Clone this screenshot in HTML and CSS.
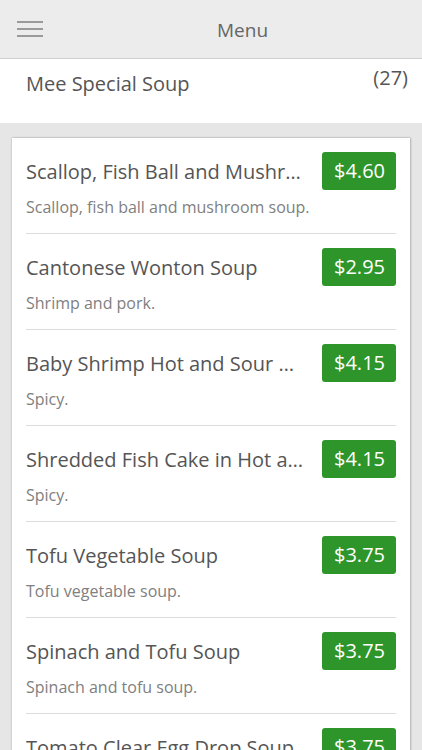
FILE: index.html
```html
<!DOCTYPE html>
<html lang="en">
<head>
    <meta charset="UTF-8">
    <title>Menu</title>
    <link rel="stylesheet" href="styles.css">
</head>
<body>

<div class="top-bar">
    <span class="burger"><i></i><i></i><i></i></span>
    <span class="top-title">Menu</span>
</div>

<div class="category">
    <span class="category-name">Mee Special Soup</span>
    <span class="category-count">(27)</span>
</div>

<div class="list-wrap">
    <ul class="dish-list">
        <li class="dish">
            <div class="dish-name">Scallop, Fish Ball and Mushroom Soup</div>
            <span class="price">$4.60</span>
            <div class="dish-desc">Scallop, fish ball and mushroom soup.</div>
        </li>
        <li class="dish">
            <div class="dish-name">Cantonese Wonton Soup</div>
            <span class="price">$2.95</span>
            <div class="dish-desc">Shrimp and pork.</div>
        </li>
        <li class="dish">
            <div class="dish-name">Baby Shrimp Hot and Sour Soup</div>
            <span class="price">$4.15</span>
            <div class="dish-desc">Spicy.</div>
        </li>
        <li class="dish">
            <div class="dish-name">Shredded Fish Cake in Hot and Sour Soup</div>
            <span class="price">$4.15</span>
            <div class="dish-desc">Spicy.</div>
        </li>
        <li class="dish">
            <div class="dish-name">Tofu Vegetable Soup</div>
            <span class="price">$3.75</span>
            <div class="dish-desc">Tofu vegetable soup.</div>
        </li>
        <li class="dish">
            <div class="dish-name">Spinach and Tofu Soup</div>
            <span class="price">$3.75</span>
            <div class="dish-desc">Spinach and tofu soup.</div>
        </li>
        <li class="dish">
            <div class="dish-name">Tomato Clear Egg Drop Soup</div>
            <span class="price">$3.75</span>
            <div class="dish-desc">Tomato clear egg drop soup.</div>
        </li>
    </ul>
</div>

</body>
</html>
```

FILE: styles.css
```css
html, body {
    margin: 0;
    height: 100%;
    overflow: hidden;
}

body {
    font-family: "Open Sans", "Liberation Sans", sans-serif;
    background-color: #e6e6e6;
    color: #555;
}

/* top bar */
.top-bar {
    height: 58px;
    background-color: #ececec;
    border-bottom: 1px solid #cfcfcf;
    display: flex;
    align-items: center;
    padding-left: 17px;
}

.burger {
    width: 26px;
    display: flex;
    flex-direction: column;
    gap: 5px;
}

.burger i {
    display: block;
    height: 2px;
    background-color: #9a9a9a;
}

.top-title {
    flex: 1;
    text-align: center;
    font-size: 19px;
    color: #666;
    padding-left: 20px;
    margin-top: 2px;
}

/* category header */
.category {
    background-color: #fff;
    height: 64px;
    display: flex;
    justify-content: space-between;
    padding: 0 14px 0 26px;
}

.category-name {
    font-size: 20px;
    margin-top: 11px;
}

.category-count {
    font-size: 20px;
    margin-top: 5px;
}

/* list card */
.list-wrap {
    padding: 15px 12px 0 12px;
}

.dish-list {
    list-style: none;
    margin: 0;
    padding: 0 14px;
    background-color: #fff;
    box-shadow: 0 0 2px rgba(0, 0, 0, 0.25), 1px 0 2px rgba(0, 0, 0, 0.15);
}

.dish {
    display: grid;
    grid-template-columns: minmax(0, 1fr) auto;
    grid-template-rows: 38px auto;
    column-gap: 18px;
    align-content: start;
    height: 81px;
    padding-top: 14px;
    border-bottom: 1px solid #dcdcdc;
}

.dish-name {
    align-self: center;
    font-size: 20px;
    white-space: nowrap;
    overflow: hidden;
    text-overflow: ellipsis;
}

.dish-desc {
    grid-column: 1 / -1;
    font-size: 16px;
    line-height: 22px;
    color: #808080;
    margin-top: 6px;
}

.price {
    background-color: #2e952a;
    color: #fff;
    font-size: 20px;
    padding: 6px 11px 6px 12px;
    border-radius: 3px;
    line-height: 26px;
}
```
